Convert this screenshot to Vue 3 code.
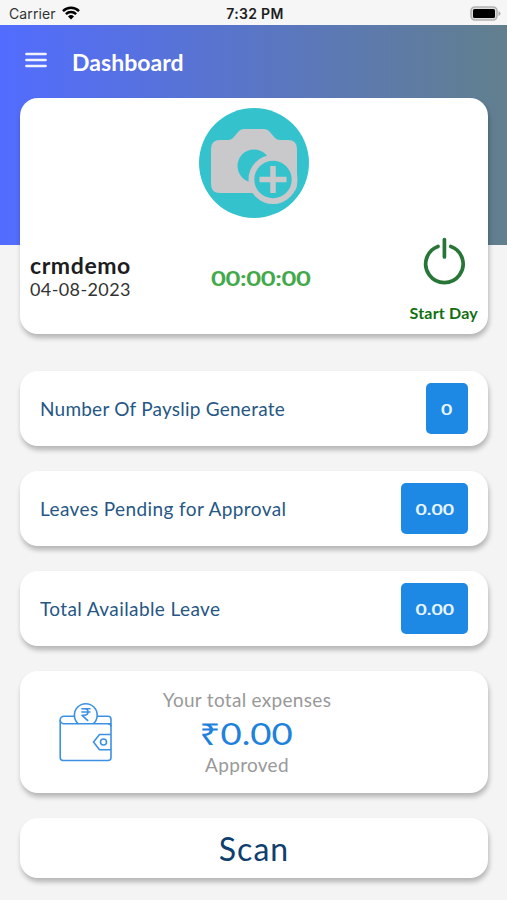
<script setup>
import { ref } from 'vue'

const userName = ref('crmdemo')
const today = ref('04-08-2023')
const workedTime = ref('00:00:00')

// 요약 카드
const stats = ref([
  { id: 'payslip', label: 'Number Of Payslip Generate', value: '0' },
  { id: 'pending', label: 'Leaves Pending for Approval', value: '0.00' },
  { id: 'available', label: 'Total Available Leave', value: '0.00' },
])

const totalExpenses = ref('0.00')
</script>

<template>
  <div class="screen">
    <!-- 상태 바 -->
    <div class="status-bar">
      <div class="carrier">
        <span class="carrier-name">Carrier</span>
        <svg class="wifi-icon" viewBox="0 0 18 14" width="18" height="14">
          <g fill="none" stroke="#000" stroke-width="2.5">
            <path d="M1 5.1a11.4 11.4 0 0 1 16 0" />
            <path d="M3.9 8.2a7.2 7.2 0 0 1 10.2 0" />
          </g>
          <path d="M9 13.6l-3-3.1a4.3 4.3 0 0 1 6 0z" />
        </svg>
      </div>
      <span class="clock">7:32 PM</span>
      <div class="battery">
        <svg viewBox="0 0 31 15" width="31" height="15">
          <rect x="1" y="1" width="26" height="13" rx="4" fill="#ddd" stroke="#b2b2b2" stroke-width="1.6" />
          <rect x="3" y="3" width="22" height="9" rx="1.5" />
          <path d="M28.5 5v5q2-1 2-2.5t-2-2.5z" fill="#aaa" />
        </svg>
      </div>
    </div>

    <main class="dashboard">
      <!-- 헤더 -->
      <header class="header">
        <button class="menu-button">
          <svg viewBox="0 0 22 16" width="22" height="16">
            <path d="M1.4 2h19.2M1.4 8h19.2M1.4 14h19.2" fill="none" stroke="#f0f3ff" stroke-width="2.5" stroke-linecap="round" />
          </svg>
        </button>
        <h1 class="title">Dashboard</h1>
      </header>

      <!-- 프로필 -->
      <section class="card profile">
        <svg class="avatar" viewBox="0 0 110 110" width="110" height="110">
          <circle cx="55" cy="55" r="55" fill="#34c3cd" />
          <path
            d="M21 32h8q3 0 5-2l6-7q2-2 5-2h20q3 0 5 2l6 7q2 2 5 2h8q9 0 9 9v35q0 9-9 9H21q-9 0-9-9V41q0-9 9-9z"
            fill="#c9c9cc"
          />
          <circle cx="55" cy="58" r="16.5" fill="#34c3cd" />
          <circle cx="74" cy="71.5" r="24.5" fill="#c9c9cc" />
          <circle cx="74" cy="71.5" r="18.7" fill="#34c3cd" />
          <path d="M74 58v27M60.5 71.5h27" stroke="#c9c9cc" stroke-width="5.5" />
        </svg>
        <div class="profile-row">
          <div class="user">
            <div class="user-name">{{ userName }}</div>
            <div class="date">{{ today }}</div>
          </div>
          <div class="timer"><span class="wide">{{ workedTime }}</span></div>
          <button class="start-button">
            <svg viewBox="0 0 44 48" width="44" height="48">
              <g fill="none" stroke="#287637" stroke-width="3.7" stroke-linecap="round">
                <path d="M16 9.4a18.7 18.7 0 1 0 12.8 0" />
                <path d="M22.4 2.5V20" />
              </g>
            </svg>
            <span class="start-label">Start Day</span>
          </button>
        </div>
      </section>

      <!-- 요약 -->
      <section v-for="stat in stats" :key="stat.id" class="card stat">
        <span class="stat-label" :class="stat.id">{{ stat.label }}</span>
        <span class="stat-value"><span class="wide">{{ stat.value }}</span></span>
      </section>

      <!-- 경비 -->
      <section class="card expenses">
        <svg class="wallet" viewBox="0 0 54 60" width="54" height="60">
          <g fill="none" stroke="#3c91e4" stroke-width="1.6" stroke-linejoin="round">
            <path d="M15.4 14.2H5a3.8 3.8 0 0 0 0 7.6h47M38.2 14.2H49q3 0 3 3v7.3" />
            <path d="M1.2 18v37.5q0 3 3 3H49q3 0 3-3V24.5q0-2.7-3-2.7" />
            <path d="M19.4 21.8a11.4 11.4 0 1 1 14.8 0" />
            <path d="M52 32.5H40.5L34.5 40l6 7.8H52" />
            <circle cx="44.5" cy="40" r="3" />
            <path d="M22.300 6.800h9.200M22.300 10h9.200M22.300 6.800h2.700q4 0 4 3.200t-4 3.300h-2l6.200 5.600" />
          </g>
        </svg>
        <div class="expenses-info">
          <div class="expenses-caption">Your total expenses</div>
          <div class="amount">
            <span class="rupee">₹</span>
            <span class="wide">{{ totalExpenses }}</span>
          </div>
          <div class="expenses-status">Approved</div>
        </div>
      </section>

      <button class="card scan-button">Scan</button>
    </main>
  </div>
</template>

<style>
body {
  margin: 0;
  background-color: #f4f4f4;
}
</style>

<style scoped>
.screen {
  width: 100%;
  height: 900px;
  overflow: hidden;
  background-color: #f4f4f4;
  font-family: Lato, 'Open Sans', sans-serif;
  color: #1d1d1f;
}

button {
  border: none;
  padding: 0;
  background: none;
  font-family: inherit;
  cursor: pointer;
}

svg {
  display: block;
}

.wide {
  display: inline-block;
  transform: scaleX(1.22);
}

/* 상태 바 */
.status-bar {
  height: 25px;
  padding: 1px 6px 0 9px;
  box-sizing: border-box;
  display: grid;
  grid-template-columns: 1fr auto 1fr;
  align-items: center;
  background-color: #f6f6f6;
  font-family: Inter, sans-serif;
}

.carrier {
  display: flex;
  align-items: center;
  gap: 6px;
}

.carrier-name {
  font-size: 14px;
  letter-spacing: 0.1px;
  color: #333;
}

.clock {
  font-size: 14px;
  font-weight: 600;
  letter-spacing: 0.3px;
}

.battery {
  justify-self: end;
}

/* 본문 */
.dashboard {
  padding: 0 19px 0 20px;
  display: flex;
  flex-direction: column;
  background: linear-gradient(90deg, #526cff, #617f8d) no-repeat;
  background-size: 100% 220px;
}

.header {
  height: 73px;
  padding-left: 5px;
  display: flex;
  align-items: center;
  gap: 25px;
}

.menu-button {
  margin-bottom: 4px;
}

.title {
  margin: 0;
  font-size: 23px;
  font-weight: 700;
  letter-spacing: 0.05px;
  color: #fff;
}

.card {
  border-radius: 18px;
  background-color: #fff;
  box-shadow: 1px 4px 5px rgba(0, 0, 0, 0.26);
}

/* 프로필 */
.profile {
  height: 236px;
  padding: 10px 10px 0;
  box-sizing: border-box;
  margin-bottom: 37px;
}

.avatar {
  margin: 0 auto;
}

.profile-row {
  margin-top: 19px;
  display: grid;
  grid-template-columns: 1fr auto 1fr;
}

.user {
  padding-top: 15px;
}

.user-name {
  font-size: 23px;
  line-height: 26px;
  font-weight: 700;
  letter-spacing: 0.6px;
}

.date {
  font-size: 18px;
  line-height: 22px;
  letter-spacing: 0.4px;
  color: #333;
}

.timer {
  padding: 27px 0 0 13px;
  font-size: 21px;
  line-height: 28px;
  font-weight: 700;
  letter-spacing: -0.3px;
  color: #43a94a;
}

.start-button {
  justify-self: end;
  display: flex;
  flex-direction: column;
  align-items: center;
}

.start-label {
  margin-top: 18px;
  font-size: 16px;
  line-height: 20px;
  font-weight: 700;
  letter-spacing: 0.2px;
  color: #107010;
}

/* 요약 */
.stat {
  height: 75px;
  margin-bottom: 25px;
  padding: 0 20px;
  display: flex;
  align-items: center;
  justify-content: space-between;
}

.stat-label {
  font-size: 19px;
  letter-spacing: 0.4px;
  color: #265785;
}

.stat-label.payslip {
  letter-spacing: 0.23px;
}

.stat-value {
  min-width: 12px;
  padding: 0 15px;
  border-radius: 5px;
  background-color: #1e88e5;
  color: #e8f5ff;
  font-size: 16px;
  font-weight: 700;
  line-height: 51px;
  text-align: center;
}

.stat:not(:has(.payslip)) .stat-value {
  min-width: 37px;
}

/* 경비 */
.expenses {
  height: 122px;
  margin-bottom: 25px;
  padding-left: 39px;
  display: flex;
  align-items: center;
}

.expenses-info {
  margin-left: 44px;
  width: 180px;
  text-align: center;
  color: #999;
}

.expenses-caption,
.expenses-status {
  font-size: 19px;
  line-height: 24px;
  letter-spacing: 0.3px;
}

.amount {
  display: flex;
  justify-content: center;
  gap: 8px;
  padding: 2px 6px 0 0;
  font-size: 31px;
  line-height: 39px;
  color: #1e82dc;
}

.rupee {
  font-family: 'Noto Sans', sans-serif;
  transform: scaleX(1.2);
}

.amount .wide {
  transform: scaleX(1.18);
}

/* 스캔 */
.scan-button {
  height: 60px;
  font-size: 32px;
  letter-spacing: 1px;
  color: #0e3f6e;
}
</style>
